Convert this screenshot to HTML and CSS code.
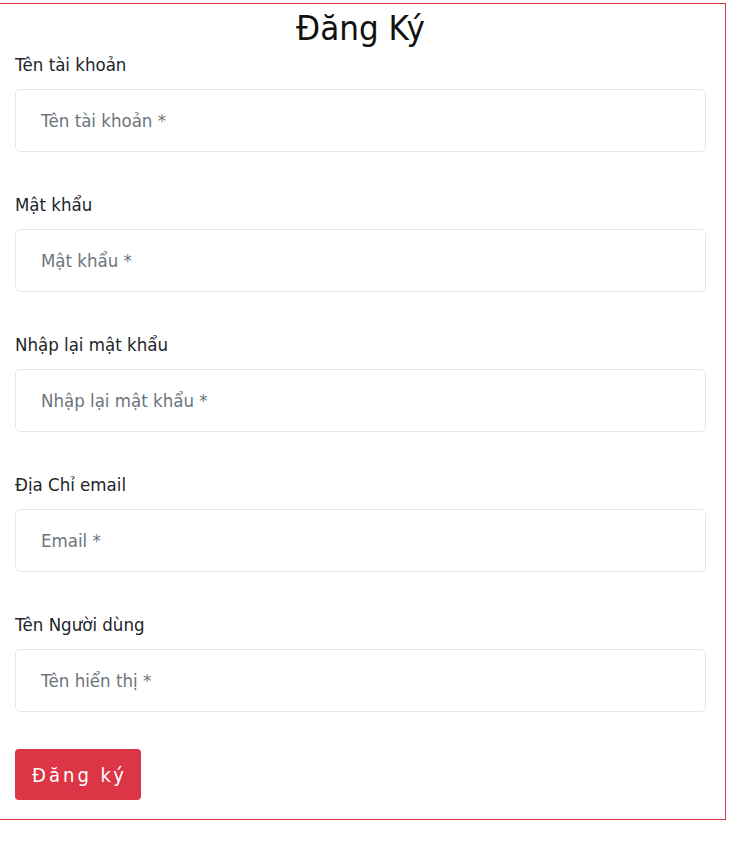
FILE: index.html
```html
<!DOCTYPE html>
<html lang="vi">
<head>
<meta charset="utf-8">
<title>Đăng Ký</title>
<link rel="stylesheet" href="styles.css">
</head>
<body>
<div class="register">
  <h2 class="title">Đăng Ký</h2>
  <div class="group">
    <label class="label" for="u">Tên tài khoản</label>
    <input class="input" id="u" type="text" placeholder="Tên tài khoản *">
  </div>
  <div class="group">
    <label class="label" for="p">Mật khẩu</label>
    <input class="input" id="p" type="password" placeholder="Mật khẩu *">
  </div>
  <div class="group">
    <label class="label" for="p2">Nhập lại mật khẩu</label>
    <input class="input" id="p2" type="password" placeholder="Nhập lại mật khẩu *">
  </div>
  <div class="group">
    <label class="label" for="e">Địa Chỉ email</label>
    <input class="input" id="e" type="email" placeholder="Email *">
  </div>
  <div class="group">
    <label class="label" for="n">Tên Người dùng</label>
    <input class="input" id="n" type="text" placeholder="Tên hiển thị *">
  </div>
  <button class="btn" type="submit">Đăng ký</button>
</div>
</body>
</html>
```
FILE: styles.css
```css
html, body {
  margin: 0;
  padding: 0;
  background: #fff;
}
body {
  font-family: "DejaVu Sans Condensed", "DejaVu Sans", sans-serif;
  font-stretch: condensed;
  color: #212529;
}
.register {
  box-sizing: border-box;
  width: 727px;
  margin: 3px 0 0 -1px;
  border: 1px solid #dc3545;
  padding: 0 19px 19px 15px;
  display: flex;
  flex-direction: column;
}
.title {
  margin: 0;
  font-size: 34.6px;
  line-height: 48px;
  font-weight: 400;
  text-align: center;
  color: #111;
}
.group {
  display: flex;
  flex-direction: column;
  margin-bottom: 40px;
}
.group:last-of-type {
  margin-bottom: 37px;
}
.label {
  font-size: 18.5px;
  line-height: 25px;
  margin-bottom: 12px;
}
.input {
  box-sizing: border-box;
  height: 63px;
  width: 100%;
  border: 1px solid #e6e6e6;
  border-radius: 5px;
  padding: 0 25px;
  font-family: inherit;
  font-stretch: condensed;
  font-size: 18.5px;
  color: #495057;
  outline: none;
}
.input::placeholder {
  color: #6c757d;
}
.btn {
  align-self: flex-start;
  box-sizing: border-box;
  width: 126px;
  height: 51px;
  border: none;
  border-radius: 4px;
  background: #dc3545;
  color: #fff;
  font-family: inherit;
  font-stretch: condensed;
  font-size: 20px;
  letter-spacing: 3px;
  padding: 0 0 0 3px;
}
```
